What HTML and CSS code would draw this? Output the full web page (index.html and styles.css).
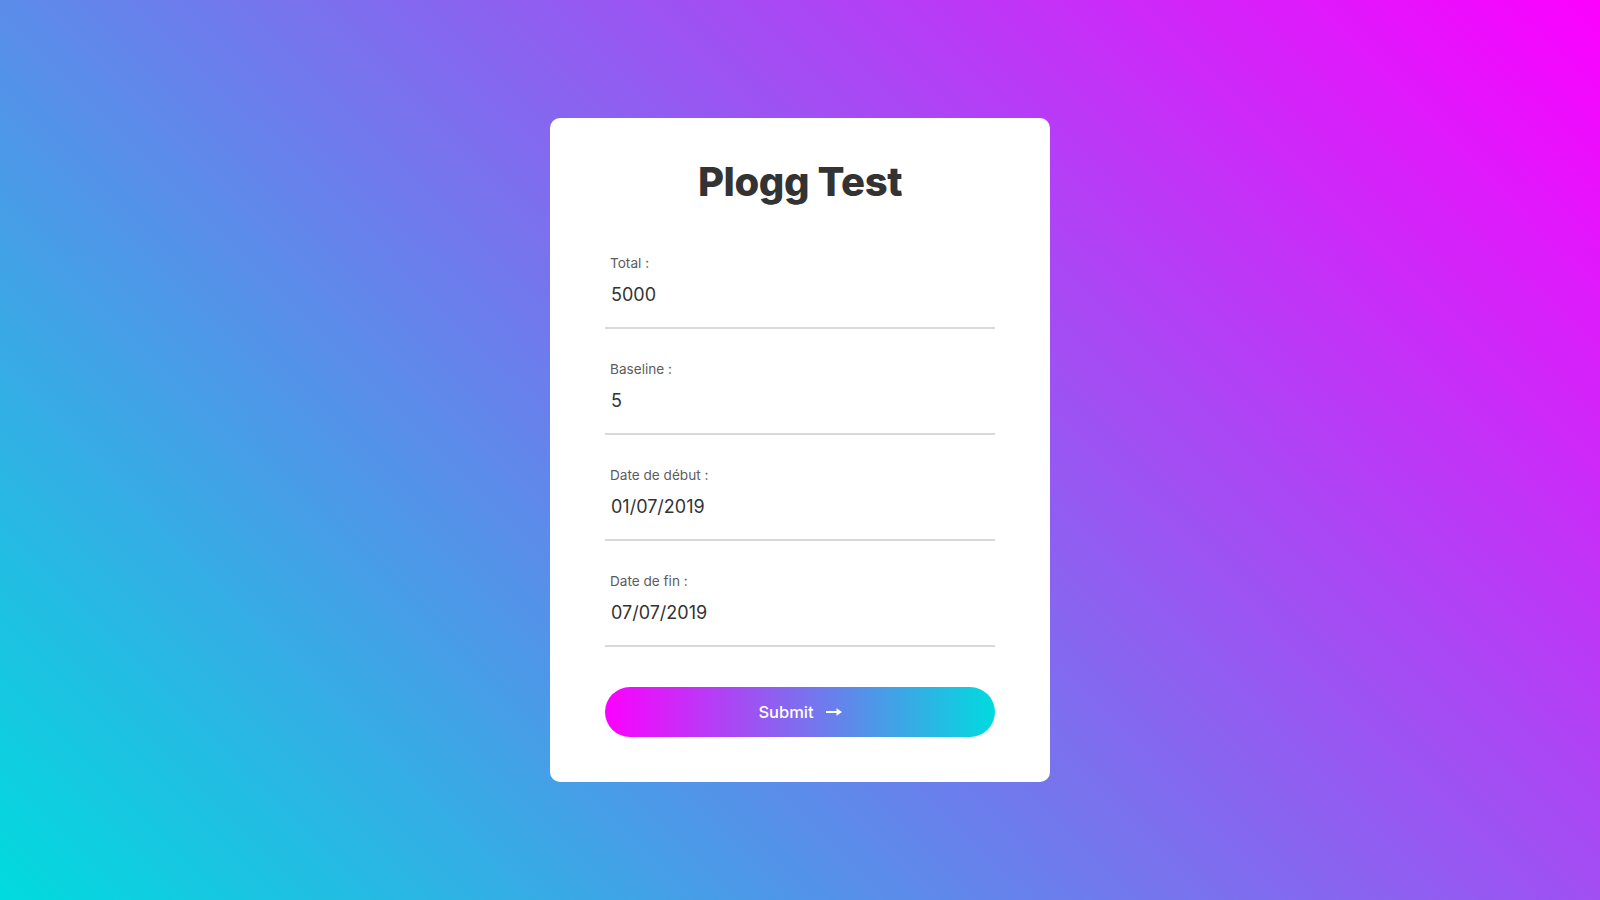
FILE: index.html
```html
<!DOCTYPE html>
<html lang="fr">
<head>
<meta charset="utf-8">
<title>Plogg Test</title>
<link rel="stylesheet" href="styles.css">
</head>
<body>
<main class="page">
  <form class="card">
    <h1 class="title">Plogg Test</h1>
    <div class="field">
      <label class="label" for="total">Total :</label>
      <input class="input" id="total" type="text" value="5000">
    </div>
    <div class="field">
      <label class="label" for="baseline">Baseline :</label>
      <input class="input" id="baseline" type="text" value="5">
    </div>
    <div class="field">
      <label class="label" for="start">Date de début :</label>
      <input class="input" id="start" type="text" value="01/07/2019">
    </div>
    <div class="field">
      <label class="label" for="end">Date de fin :</label>
      <input class="input" id="end" type="text" value="07/07/2019">
    </div>
    <button class="submit" type="button">
      <span>Submit</span>
      <svg class="arrow" width="16" height="10" viewBox="0 0 16 10" aria-hidden="true">
        <path d="M0 5H12" stroke="#fff" stroke-width="2"/>
        <path d="M10.5 1.2L16 5L10.5 8.8Z" fill="#fff"/>
      </svg>
    </button>
  </form>
</main>
</body>
</html>
```
FILE: styles.css
```css
* { box-sizing: border-box; }

html, body {
  margin: 0;
  padding: 0;
  height: 100%;
}

body {
  font-family: "Inter", "Noto Sans", sans-serif;
  background: linear-gradient(45deg, #00dbde, #fc00ff);
}

.page {
  min-height: 100vh;
  display: flex;
  align-items: center;
  justify-content: center;
}

.card {
  width: 500px;
  background: #fff;
  border-radius: 10px;
  padding: 40px 55px 45px;
  display: flex;
  flex-direction: column;
}

.title {
  margin: 0 0 47px;
  font-size: 40px;
  line-height: 48px;
  font-weight: 800;
  color: #333;
  text-align: center;
  letter-spacing: -0.4px;
}

.field {
  display: flex;
  flex-direction: column;
  padding-bottom: 11px;
  border-bottom: 2px solid #d9d9d9;
  margin-bottom: 30px;
}

.field:last-of-type {
  margin-bottom: 40px;
}

.label {
  display: block;
  padding-left: 5px;
  font-size: 13.6px;
  line-height: 20px;
  color: #5c5c5c;
}

.input {
  display: block;
  width: 100%;
  height: 43px;
  padding: 0 6px;
  border: none;
  outline: none;
  background: transparent;
  font-family: inherit;
  font-size: 18px;
  font-weight: 400;
  color: #333;
}

.submit {
  height: 50px;
  width: 100%;
  border: none;
  border-radius: 25px;
  background: linear-gradient(to right, #fc00ff, #00dbde);
  color: #fff;
  font-family: inherit;
  font-size: 16.5px;
  font-weight: 500;
  display: flex;
  align-items: center;
  justify-content: center;
  gap: 12px;
  cursor: pointer;
}

.arrow {
  display: block;
}
```
